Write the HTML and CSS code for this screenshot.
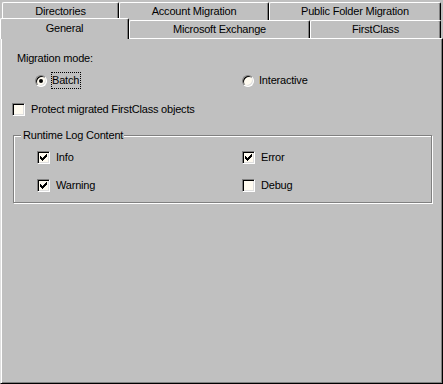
FILE: index.html
```html
<!DOCTYPE html>
<html>
<head>
  <title>Migration Settings</title>
  <meta name="viewport" content="width=device-width, initial-scale=1">
  <link rel="stylesheet" href="styles.css">
</head>
<body>
  <div class="tabs">
    <div class="tab-row back">
      <div class="tab w-dir">Directories</div>
      <div class="tab w-acc">Account Migration</div>
      <div class="tab w-pub">Public Folder Migration</div>
    </div>
    <div class="tab-row front">
      <div class="tab w-gen selected">General</div>
      <div class="tab w-exc">Microsoft Exchange</div>
      <div class="tab w-fc">FirstClass</div>
    </div>
  </div>

  <div class="panel">
    <div class="mode-label">Migration mode:</div>

    <div class="radio-row">
      <label class="opt">
        <span class="radio"><span class="dot"></span></span>
        <span class="focus">Batch</span>
      </label>
      <label class="opt">
        <span class="radio"></span>
        <span class="focus off">Interactive</span>
      </label>
    </div>

    <label class="opt protect">
      <span class="check"></span>
      <span class="text">Protect migrated FirstClass objects</span>
    </label>

    <div class="group">
      <div class="legend">Runtime Log Content</div>
      <div class="check-grid">
        <label class="opt">
          <span class="check"><svg width="7" height="7" viewBox="0 0 7 7" shape-rendering="crispEdges"><path d="M0 2h1v3H0zM1 3h1v3H1zM2 4h1v3H2zM3 3h1v3H3zM4 2h1v3H4zM5 1h1v3H5zM6 0h1v3H6z" fill="#000"/></svg></span>
          <span class="text">Info</span>
        </label>
        <label class="opt">
          <span class="check"><svg width="7" height="7" viewBox="0 0 7 7" shape-rendering="crispEdges"><path d="M0 2h1v3H0zM1 3h1v3H1zM2 4h1v3H2zM3 3h1v3H3zM4 2h1v3H4zM5 1h1v3H5zM6 0h1v3H6z" fill="#000"/></svg></span>
          <span class="text">Error</span>
        </label>
        <label class="opt">
          <span class="check"><svg width="7" height="7" viewBox="0 0 7 7" shape-rendering="crispEdges"><path d="M0 2h1v3H0zM1 3h1v3H1zM2 4h1v3H2zM3 3h1v3H3zM4 2h1v3H4zM5 1h1v3H5zM6 0h1v3H6z" fill="#000"/></svg></span>
          <span class="text">Warning</span>
        </label>
        <label class="opt">
          <span class="check"></span>
          <span class="text">Debug</span>
        </label>
      </div>
    </div>
  </div>
</body>
</html>
```
FILE: styles.css
```css
html, body { margin: 0; padding: 0; }
body {
  width: 443px;
  height: 384px;
  overflow: hidden;
  background: #c0c0c0;
  font-family: "Liberation Sans", Arial, sans-serif;
  font-size: 11px;
  letter-spacing: -0.2px;
  color: #000;
}

/* tab strip */
.tab-row { display: flex; }
.tab-row.back { margin-top: 2px; padding-left: 2px; height: 18px; }
.tab-row.front { margin-top: -2px; height: 20px; }
.tab {
  box-sizing: border-box;
  height: 18px;
  line-height: 16px;
  text-align: center;
  background: #c0c0c0;
  border-top: 1px solid #fff;
  border-left: 1px solid #fff;
  border-right: 1px solid #000;
  border-radius: 2px 2px 0 0;
  box-shadow: inset -1px 0 0 #808080;
  align-self: flex-end;
}
.tab.selected {
  align-self: flex-start;
  height: 21px;
  line-height: 19px;
  margin-bottom: -1px;
  position: relative;
  z-index: 1;
}
.w-dir { width: 117px; }
.w-acc { width: 150px; }
.w-pub { width: 172px; }
.w-gen { width: 129px; }
.w-exc { width: 181px; }
.w-fc { width: 131px; }

/* page panel */
.panel {
  box-sizing: border-box;
  height: 346px;
  border-top: 1px solid #fff;
  border-left: 1px solid #dfdfdf;
  border-right: 1px solid #000;
  border-bottom: 1px solid #000;
  box-shadow: inset 1px 0 0 #fff, inset -1px -1px 0 #808080;
}

.mode-label { margin-top: 13px; padding-left: 16px; line-height: 13px; }

.opt { display: flex; align-items: center; line-height: 13px; }

.radio-row {
  display: grid;
  grid-template-columns: 207px 1fr;
  margin-top: 7px;
  padding-left: 34px;
  height: 17px;
  align-items: center;
}
.radio {
  box-sizing: border-box;
  width: 12px;
  height: 12px;
  border-radius: 50%;
  border: 1px solid;
  border-color: #808080 #fff #fff #808080;
  background: #fffbf0;
  box-shadow: inset 1px 1px 0 #000, inset -1px -1px 0 #dfdfdf;
  display: flex;
  align-items: center;
  justify-content: center;
  margin-right: 4px;
}
.dot { width: 4px; height: 4px; border-radius: 50%; background: #000; }
.focus { border: 1px dotted #000; padding: 1px 1px 1px 0; }
.focus.off { border-color: transparent; }

.check {
  box-sizing: border-box;
  width: 13px;
  height: 13px;
  border: 1px solid;
  border-color: #808080 #fff #fff #808080;
  background: #fffbf0;
  box-shadow: inset 1px 1px 0 #000, inset -1px -1px 0 #dfdfdf;
  display: flex;
  align-items: center;
  justify-content: center;
  margin-right: 6px;
}
.check svg { display: block; }

.protect { margin-top: 14px; padding-left: 11px; height: 13px; }

/* group box */
.group {
  box-sizing: border-box;
  margin: 19px 0 0 12px;
  width: 419px;
  height: 68px;
  border: 1px solid #808080;
  box-shadow: inset 1px 1px 0 #fff, 1px 1px 0 #fff;
}
.legend {
  width: max-content;
  margin: -7px 0 0 7px;
  padding: 0 1px 0 2px;
  background: #c0c0c0;
  line-height: 13px;
}
.check-grid {
  display: grid;
  grid-template-columns: 205px 1fr;
  row-gap: 15px;
  margin-top: 9px;
  padding-left: 23px;
}
```
